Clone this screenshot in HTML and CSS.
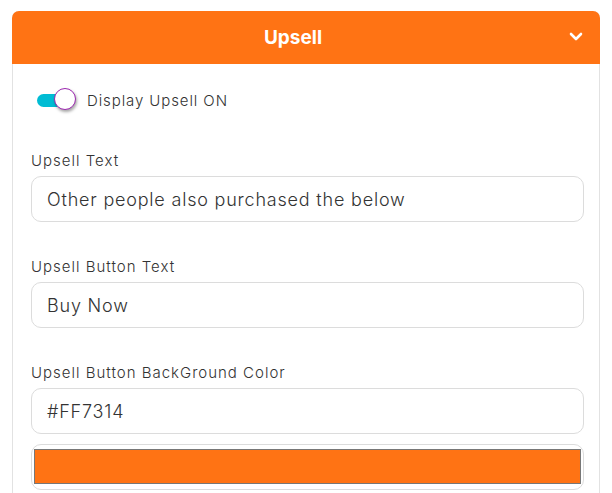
FILE: index.html
```html
<!DOCTYPE html>
<html>
<head>
<meta charset="utf-8">
<link rel="stylesheet" href="styles.css">
</head>
<body>
<div class="card">
  <div class="card-header">
    <span class="title">Upsell</span>
    <svg class="chevron" width="14" height="10" viewBox="0 0 14 10"><path d="M2 2 L7 7 L12 2" fill="none" stroke="#fff" stroke-width="2.6" stroke-linecap="round" stroke-linejoin="round"/></svg>
  </div>
  <div class="card-body">
    <div class="toggle-row">
      <span class="switch"><span class="track"></span><span class="knob"></span></span>
      <span class="toggle-label">Display Upsell ON</span>
    </div>
    <div class="group">
      <div class="label">Upsell Text</div>
      <div class="input">Other people also purchased the below</div>
    </div>
    <div class="group">
      <div class="label">Upsell Button Text</div>
      <div class="input">Buy Now</div>
    </div>
    <div class="group">
      <div class="label">Upsell Button BackGround Color</div>
      <div class="input">#FF7314</div>
      <div class="color-input"><div class="swatch"></div></div>
    </div>
  </div>
</div>
</body>
</html>
```
FILE: styles.css
```css
html, body { margin: 0; padding: 0; background: #fff; }
body {
  font-family: "Inter", "DejaVu Sans", sans-serif;
  font-weight: 300;
  color: #333;
  padding: 11px 12px 0 12px;
}
.card {
  width: 588px;
  border: 1px solid #e2e2e2;
  border-top: none;
  border-radius: 7px 7px 0 0;
  box-sizing: border-box;
}
.card-header {
  background: #ff7314;
  height: 53px;
  border-radius: 7px 7px 0 0;
  margin: 0 -1px;
  display: flex;
  align-items: center;
  justify-content: center;
  position: relative;
}
.title {
  color: #fff;
  font-weight: 700;
  font-size: 19px;
  margin-right: 26px;
}
.chevron {
  position: absolute;
  right: 17px;
  top: 21px;
}
.card-body {
  padding: 24px 15px 20px 18px;
}
.toggle-row {
  display: flex;
  align-items: center;
  height: 24px;
  padding-left: 6px;
}
.switch {
  position: relative;
  width: 40px;
  height: 24px;
  display: inline-block;
}
.track {
  position: absolute;
  left: 0;
  top: 6px;
  width: 30px;
  height: 13px;
  background: #00bcd4;
  border-radius: 7px;
}
.knob {
  position: absolute;
  left: 17px;
  top: 0;
  width: 20px;
  height: 20px;
  border-radius: 50%;
  background: #fff;
  border: 1.5px solid #9c27b0;
  box-shadow: 1px 2px 3px rgba(0,0,0,0.35);
}
.toggle-label {
  font-size: 15px;
  letter-spacing: 0.9px;
  margin-left: 10px;
  color: #333;
}
.group { margin-top: 36px; }
.toggle-row + .group { margin-top: 40px; }
.label {
  font-size: 15px;
  letter-spacing: 1px;
  color: #333;
  height: 18px;
  line-height: 18px;
  margin-bottom: 6px;
}
.input {
  height: 46px;
  box-sizing: border-box;
  border: 1px solid #dcdcdc;
  border-radius: 10px;
  padding: 0 15px;
  display: flex;
  align-items: center;
  font-size: 18px;
  letter-spacing: 0.8px;
  color: #333;
}
.color-input {
  margin-top: 10px;
  height: 46px;
  box-sizing: border-box;
  border: 1px solid #dcdcdc;
  border-radius: 10px;
  padding: 4px 2px;
}
.swatch {
  height: 35px;
  box-sizing: border-box;
  background: #ff7314;
  border: 1px solid #777;
}
```
